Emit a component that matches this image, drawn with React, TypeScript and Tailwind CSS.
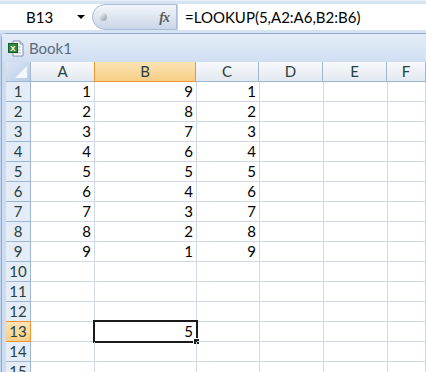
import * as React from 'react';

const cols = ['A', 'B', 'C', 'D', 'E', 'F'];
const widths = ['w-[64px]', 'w-[102px]', 'w-[63px]', 'w-[64px]', 'w-[64px]', 'flex-1'];

const data: Record<number, (number | null)[]> = {
  1: [1, 9, 1], 2: [2, 8, 2], 3: [3, 7, 3], 4: [4, 6, 4], 5: [5, 5, 5],
  6: [6, 4, 6], 7: [7, 3, 7], 8: [8, 2, 8], 9: [9, 1, 9],
};

const ExcelIcon: React.FC = () => (
  <svg width="16" height="17" viewBox="0 0 16 17">
    <path d="M5 1h7l3 3v12H5z" fill="#fff" stroke="#7f8fa8" />
    <path d="M12 1v3h3" fill="#e6ecf5" stroke="#7f8fa8" />
    <path d="M7 7h6M7 10h6M7 13h6" stroke="#9fb3cc" />
    <rect x="0.5" y="3.5" width="9" height="9" fill="#2f8a3a" stroke="#1d5e26" />
    <text x="5" y="11" fontSize="8" fontWeight="bold" fill="#fff" textAnchor="middle" fontFamily="Liberation Sans, sans-serif">X</text>
  </svg>
);

const App: React.FC = () => {
  const rows = Array.from({ length: 15 }, (_, i) => i + 1);
  return (
    <div className="w-[426px] h-[372px] overflow-hidden bg-[#c3d5ec] font-['Lato',sans-serif] text-[15px] text-black">
      {/* formula bar */}
      <div className="h-[33px] bg-[#d6e3f3] pt-[3px] pb-[3px] flex border-t border-[#e9f0f9]">
        <div className="w-[92px] bg-white flex items-center relative">
          <span className="ml-[26px] text-[15px]">B13</span>
          <span className="absolute left-[77px] top-[11px] w-0 h-0 border-l-[4px] border-r-[4px] border-t-[4px] border-l-transparent border-r-transparent border-t-black" />
        </div>
        <div className="w-[85px] bg-white flex">
          <div className="flex-1 rounded-l-full border border-[#a9bbd6] bg-gradient-to-b from-[#f3f6fa] via-[#dfe6f0] to-[#c9d6e7] flex items-center relative">
            <span className="absolute left-[6px] top-[8px] w-[8px] h-[8px] rounded-full bg-gradient-to-br from-[#ffffff] to-[#8e99a8]" />
            <span className="ml-auto mr-[7px] font-['Liberation_Serif',serif] italic text-[14px] text-[#5c5c5c] font-bold tracking-[-1px]">fx</span>
          </div>
        </div>
        <div className="flex-1 bg-white border-l border-[#c8d3e2] flex items-center pl-[7px] text-[15px]">
          =LOOKUP(5,A2:A6,B2:B6)
        </div>
      </div>
      {/* window */}
      <div className="ml-[1px] border-l border-t border-[#8fa8cb] rounded-tl-[6px] bg-[#cddcf0] h-full">
        <div className="h-[28px] bg-gradient-to-b from-[#e4edf8] to-[#cfdff2] flex items-center pl-[6px]">
          <ExcelIcon />
          <span className="ml-[5px] text-[15px] text-[#5b6b80]">Book1</span>
        </div>
        <div className="ml-[4px] bg-white">
          {/* header */}
          <div className="flex h-[20px]">
            <div className="w-[25px] border-r border-b border-[#9eb6ce] bg-gradient-to-br from-[#dbe6f4] to-[#b9cde5] relative">
              <svg className="absolute right-[3px] bottom-[3px]" width="12" height="12"><path d="M12 0V12H0z" fill="#f4f8fc" /></svg>
            </div>
            {cols.map((c, i) => (
              <div
                key={c}
                className={`${widths[i]} shrink-0 flex items-center justify-center text-[#27413e] ${
                  c === 'B'
                    ? 'bg-gradient-to-b from-[#fbe3b4] to-[#f7cf85] border-r border-b border-[#f29536] border-l border-l-[#f29536] -ml-[1px]'
                    : 'bg-gradient-to-b from-[#f8f9fb] to-[#e3e9f1] border-r border-b border-[#9eb6ce]'
                }`}
              >
                {c}
              </div>
            ))}
          </div>
          {rows.map((r) => (
            <div key={r} className="flex h-[20px]">
              <div
                className={`w-[25px] shrink-0 flex items-center justify-center text-[#27413e] border-r border-b ${
                  r === 13
                    ? 'bg-gradient-to-b from-[#fbe3b4] to-[#f7cf85] border-[#f29536] border-t -mt-[1px] h-[21px]'
                    : 'bg-[#e4ecf7] border-[#9eb6ce]'
                }`}
              >
                {r}
              </div>
              {cols.map((c, i) => {
                const v = i < 3 ? data[r]?.[i] : null;
                const selected = r === 13 && c === 'B';
                return (
                  <div
                    key={c}
                    className={`${widths[i]} shrink-0 border-r border-b border-[#d0d7e5] flex items-center justify-end pr-[3px] relative`}
                  >
                    {selected ? '5' : v ?? ''}
                    {selected && (
                      <>
                        <span className="absolute -left-[2px] -top-[2px] -right-[2px] -bottom-[2px] border-[2px] border-[#1b1b1b]" />
                        <span className="absolute -right-[4px] -bottom-[4px] w-[7px] h-[7px] bg-[#1b1b1b] border border-white" />
                      </>
                    )}
                  </div>
                );
              })}
            </div>
          ))}
        </div>
      </div>
    </div>
  );
};

export default App;
